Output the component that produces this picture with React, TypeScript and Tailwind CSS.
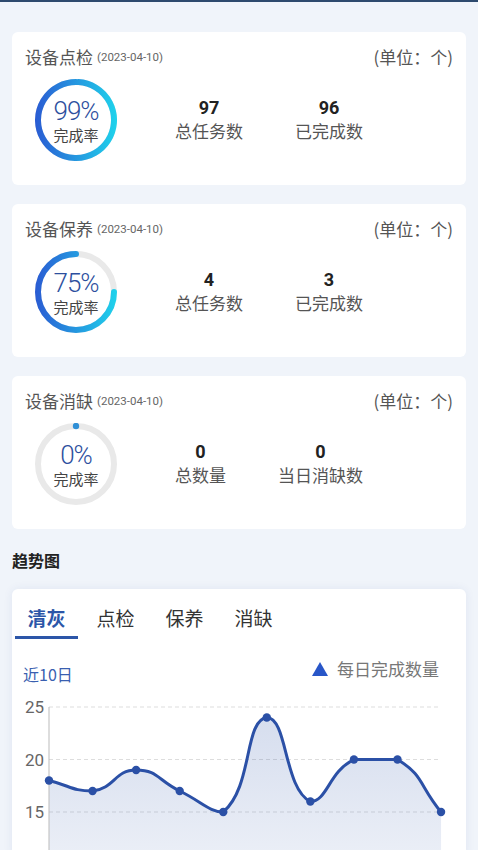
import React from "react";

const CJK = "font-['Noto_Sans_CJK_SC',sans-serif]";
const NUM = "font-['Roboto','Noto_Sans_CJK_SC',sans-serif]";

function Ring({ pct, id }: { pct: number; id: string }) {
  const cx = 41, cy = 41, r = 38;
  const theta = (pct / 100) * 2 * Math.PI;
  const ex = cx - r * Math.sin(theta);
  const ey = cy - r * Math.cos(theta);
  const large = pct > 50 ? 1 : 0;
  return (
    <div className="relative w-[82px] h-[82px] shrink-0">
      <svg width="82" height="82" viewBox="0 0 82 82" className="absolute inset-0">
        <defs>
          <linearGradient id={id} x1="0" y1="0" x2="82" y2="0" gradientUnits="userSpaceOnUse">
            <stop offset="0" stopColor="#2a5bd3" />
            <stop offset="1" stopColor="#1fd3ec" />
          </linearGradient>
        </defs>
        <circle cx={cx} cy={cy} r={r} fill="none" stroke="#e9e9e9" strokeWidth="6" />
        {pct > 0 ? (
          <path
            d={`M ${cx} ${cy - r} A ${r} ${r} 0 ${large} 0 ${ex} ${ey}`}
            fill="none"
            stroke={`url(#${id})`}
            strokeWidth="6"
            strokeLinecap="round"
          />
        ) : (
          <circle cx={cx} cy={cy - r} r="3.2" fill="#2f8fd6" />
        )}
      </svg>
      <div className="absolute inset-0 flex flex-col items-center justify-center">
        <div className={`${NUM} text-[26px] leading-[26px] font-light text-[#2d4f9e] tracking-[-1px] mt-[2px]`}>{pct}%</div>
        <div className={`${CJK} text-[15px] leading-[20px] text-[#444] mt-[1px]`}>完成率</div>
      </div>
    </div>
  );
}

function StatCard({
  title,
  pct,
  id,
  stats,
}: {
  title: string;
  pct: number;
  id: string;
  stats: { v: string; l: string }[];
}) {
  return (
    <div className="bg-white rounded-md px-[13px] pt-[14px] pb-[24px]">
      <div className="flex justify-between items-center h-[22px]">
        <div className="flex items-center">
          <span className={`${CJK} text-[17px] text-[#555]`}>{title}</span>
          <span className={`${NUM} text-[11.5px] text-[#666] ml-[4px] mt-[1px]`}>(2023-04-10)</span>
        </div>
        <span className={`${CJK} text-[17px] text-[#555]`}>(单位：个)</span>
      </div>
      <div className="flex items-center mt-[11px]">
        <div className="ml-[10px]">
          <Ring pct={pct} id={id} />
        </div>
        <div className="flex gap-[52px] ml-[58px]">
          {stats.map((s) => (
            <div key={s.l} className="flex flex-col items-center">
              <div className={`${NUM} text-[18px] leading-[22px] font-bold text-[#222]`}>{s.v}</div>
              <div className={`${CJK} text-[17px] leading-[24px] text-[#555]`}>{s.l}</div>
            </div>
          ))}
        </div>
      </div>
    </div>
  );
}

const DATA = [18, 17, 19, 17, 15, 24, 16, 20, 20, 15];

function smoothPath(pts: [number, number][], smooth = 0.5) {
  const n = pts.length;
  const ins: [number, number][] = [];
  const outs: [number, number][] = [];
  const clamp = (v: number, a: number, b: number) => Math.min(Math.max(v, Math.min(a, b)), Math.max(a, b));
  for (let i = 0; i < n; i++) {
    const [x, y] = pts[i];
    const [px, py] = pts[i - 1] ?? pts[i];
    const [nx, ny] = pts[i + 1] ?? pts[i];
    const vx = nx - px, vy = ny - py;
    const l0 = Math.hypot(x - px, y - py);
    const l1 = Math.hypot(nx - x, ny - y);
    const rn = l0 + l1 === 0 ? 0.5 : l1 / (l0 + l1);
    let inX = x - vx * smooth * (1 - rn);
    let inY = y - vy * smooth * (1 - rn);
    let outX = x + vx * smooth * rn;
    let outY = y + vy * smooth * rn;
    inX = clamp(inX, px, x);
    inY = clamp(inY, py, y);
    outX = clamp(outX, nx, x);
    outY = clamp(outY, ny, y);
    ins.push([inX, inY]);
    outs.push([outX, outY]);
  }
  let d = `M ${pts[0][0]} ${pts[0][1]}`;
  for (let i = 0; i < n - 1; i++) {
    d += ` C ${outs[i][0]} ${outs[i][1]} ${ins[i + 1][0]} ${ins[i + 1][1]} ${pts[i + 1][0]} ${pts[i + 1][1]}`;
  }
  return d;
}

function Chart() {
  const x0 = 37;
  const step = 43.56;
  const yOf = (v: number) => 122 - (v - 15) * 10.5;
  const pts: [number, number][] = DATA.map((v, i) => [x0 + i * step, yOf(v)]);
  const line = smoothPath(pts);
  const last = pts[pts.length - 1][0];
  const area = `${line} L ${last} 230 L ${x0} 230 Z`;
  const grid = [
    { y: 17, l: "25" },
    { y: 69.5, l: "20" },
    { y: 122, l: "15" },
  ];
  return (
    <svg width="456" height="170" viewBox="0 0 456 170" className="block mt-[5px]">
      <defs>
        <linearGradient id="areaG" x1="0" y1="17" x2="0" y2="230" gradientUnits="userSpaceOnUse">
          <stop offset="0" stopColor="#2a52a8" stopOpacity="0.2" />
          <stop offset="1" stopColor="#2a52a8" stopOpacity="0.05" />
        </linearGradient>
      </defs>
      {grid.map((g) => (
        <g key={g.l}>
          <line x1={x0} y1={g.y} x2={429} y2={g.y} stroke="#dddddd" strokeWidth="1" strokeDasharray="4 3" />
          <text
            x="32"
            y={g.y + 6}
            textAnchor="end"
            fontSize="17"
            fill="#666"
            fontFamily="Roboto, 'Noto Sans', sans-serif"
          >
            {g.l}
          </text>
        </g>
      ))}
      <path d={area} fill="url(#areaG)" />
      <line x1={x0} y1={17} x2={x0} y2={170} stroke="#bbbbbb" strokeWidth="1" />
      <path d={line} fill="none" stroke="#2b50a6" strokeWidth="3" strokeLinejoin="round" />
      {pts.map(([x, y], i) => (
        <circle key={i} cx={x} cy={y} r="4.2" fill="#2b50a6" />
      ))}
    </svg>
  );
}

export default function App() {
  const tabs = ["清灰", "点检", "保养", "消缺"];
  return (
    <div className="min-h-[850px] bg-[#f0f4fa] overflow-hidden">
      <div className="h-[2px] bg-[#2e4a6e]" />
      <div className="px-3 pt-[30px]">
        <div className="flex flex-col gap-[19px]">
          <StatCard
            title="设备点检"
            pct={99}
            id="g1"
            stats={[
              { v: "97", l: "总任务数" },
              { v: "96", l: "已完成数" },
            ]}
          />
          <StatCard
            title="设备保养"
            pct={75}
            id="g2"
            stats={[
              { v: "4", l: "总任务数" },
              { v: "3", l: "已完成数" },
            ]}
          />
          <StatCard
            title="设备消缺"
            pct={0}
            id="g3"
            stats={[
              { v: "0", l: "总数量" },
              { v: "0", l: "当日消缺数" },
            ]}
          />
        </div>
        <div className={`${CJK} text-[16px] leading-[22px] font-bold text-[#222] mt-[20px]`}>趋势图</div>
        <div className="bg-white rounded-md mt-[18px] pt-[15px] shadow-[0_0_10px_rgba(40,70,140,0.08)]">
          <div className="flex gap-[6px] pl-[3px]">
            {tabs.map((t, i) => (
              <div
                key={t}
                className={`${CJK} w-[63px] text-center text-[19px] leading-[28px] pb-[4px] border-b-[3px] ${
                  i === 0 ? "border-[#2c56a8] text-[#2c56a8] font-semibold" : "border-transparent text-[#333]"
                }`}
              >
                {t}
              </div>
            ))}
          </div>
          <div className="flex justify-between mt-[19px] pl-[11px] pr-[27px]">
            <div className={`${CJK} text-[16px] leading-[22px] text-[#3a5fb0] pt-[5px]`}>近10日</div>
            <div className="flex items-center h-[22px]">
              <svg width="16" height="14" viewBox="0 0 16 14">
                <polygon points="8,0 16,14 0,14" fill="#2856c8" />
              </svg>
              <span className={`${CJK} text-[17px] leading-[22px] text-[#777] ml-[9px]`}>每日完成数量</span>
            </div>
          </div>
          <Chart />
        </div>
      </div>
    </div>
  );
}
